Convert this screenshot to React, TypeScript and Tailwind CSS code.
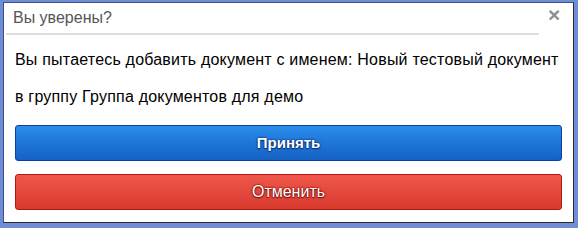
export default function App() {
  return (
    <div className="w-[578px] h-[228px] bg-[#6f8dd6] pl-[3px] pt-[2px] pr-[4px] pb-[5px]">
      <div
        className="h-full bg-white border-r border-b border-[#2b2b2b] border-l border-t border-l-[#3c4f86] border-t-[#3c4f86] flex flex-col"
        style={{ fontFamily: '"Liberation Sans", Arial, sans-serif' }}
      >
        {/* header */}
        <div className="h-[32px] ml-[2px] border-b-2 border-[#dddddd] mr-[34px]">
          <div className="pl-[7px] pt-[5px] text-[16px] text-[#555555] leading-[20px]">Вы уверены?</div>
        </div>
        <button className="absolute left-[548px] top-[5px] text-[21px] leading-[20px] font-bold text-[#8f8f8f]">
          ×
        </button>

        {/* message */}
        <div className="px-[11px] pt-[6px] text-[16px] tracking-[0.2px] text-black leading-[37px]">
          <div>Вы пытаетесь добавить документ с именем: Новый тестовый документ</div>
          <div>в группу Группа документов для демо</div>
        </div>

        {/* actions */}
        <div className="px-[11px] mt-[10px] flex flex-col gap-[13px]">
          <button className="h-[36px] w-full rounded-[3px] border border-[#0b3f99] bg-gradient-to-b from-[#2b8ceb] to-[#1461c4] text-white font-bold text-[15px] [text-shadow:0_0_2px_#0a2f73,0_0_2px_#0a2f73,0_1px_1px_#0a2f73]">
            Принять
          </button>
          <button className="h-[36px] w-full rounded-[3px] border border-[#b3180f] bg-gradient-to-b from-[#f0574b] to-[#d8392d] text-white text-[16px] [text-shadow:0_0_2px_#7d0f0a,0_0_2px_#7d0f0a,0_1px_1px_#7d0f0a]">
            Отменить
          </button>
        </div>
      </div>
    </div>
  )
}
